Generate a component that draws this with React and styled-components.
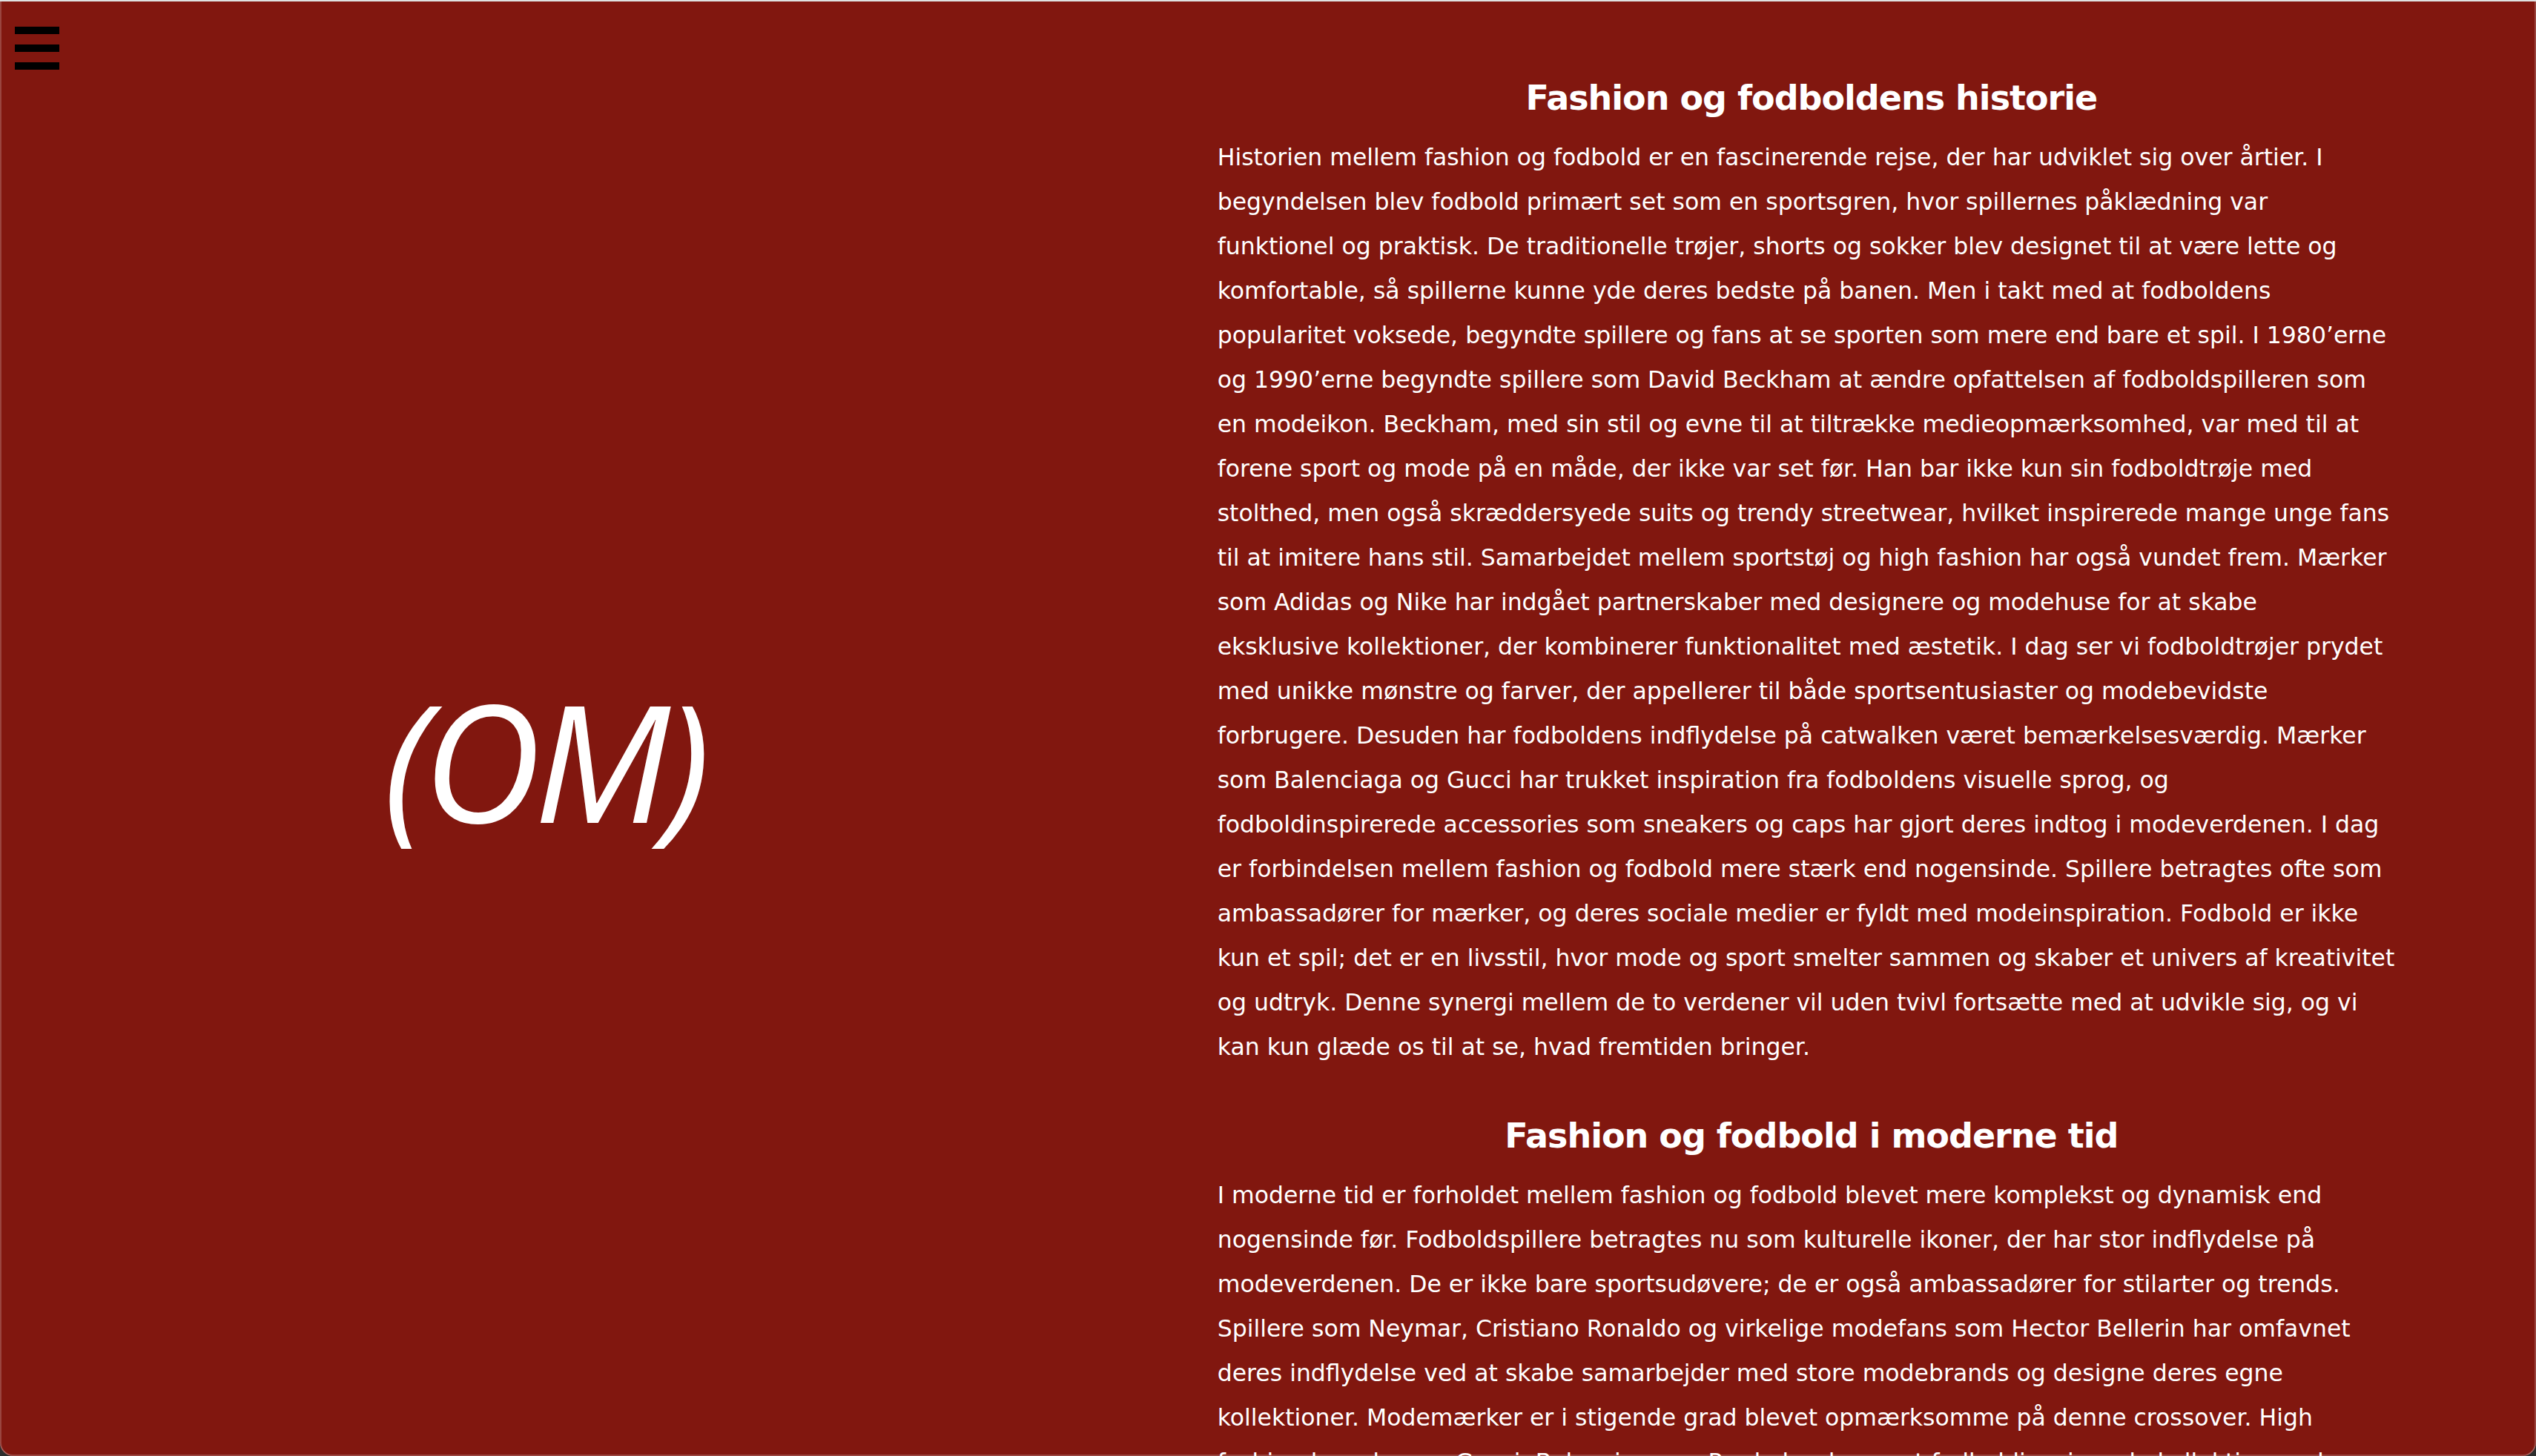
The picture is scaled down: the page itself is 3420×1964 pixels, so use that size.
import React from 'react';
import styled, { createGlobalStyle } from 'styled-components';

// lines kept as in the original layout, so the wrapping stays the same
const sections = [
  {
    title: 'Fashion og fodboldens historie',
    lines: [
      'Historien mellem fashion og fodbold er en fascinerende rejse, der har udviklet sig over årtier. I',
      'begyndelsen blev fodbold primært set som en sportsgren, hvor spillernes påklædning var',
      'funktionel og praktisk. De traditionelle trøjer, shorts og sokker blev designet til at være lette og',
      'komfortable, så spillerne kunne yde deres bedste på banen. Men i takt med at fodboldens',
      'popularitet voksede, begyndte spillere og fans at se sporten som mere end bare et spil. I 1980’erne',
      'og 1990’erne begyndte spillere som David Beckham at ændre opfattelsen af fodboldspilleren som',
      'en modeikon. Beckham, med sin stil og evne til at tiltrække medieopmærksomhed, var med til at',
      'forene sport og mode på en måde, der ikke var set før. Han bar ikke kun sin fodboldtrøje med',
      'stolthed, men også skræddersyede suits og trendy streetwear, hvilket inspirerede mange unge fans',
      'til at imitere hans stil. Samarbejdet mellem sportstøj og high fashion har også vundet frem. Mærker',
      'som Adidas og Nike har indgået partnerskaber med designere og modehuse for at skabe',
      'eksklusive kollektioner, der kombinerer funktionalitet med æstetik. I dag ser vi fodboldtrøjer prydet',
      'med unikke mønstre og farver, der appellerer til både sportsentusiaster og modebevidste',
      'forbrugere. Desuden har fodboldens indflydelse på catwalken været bemærkelsesværdig. Mærker',
      'som Balenciaga og Gucci har trukket inspiration fra fodboldens visuelle sprog, og',
      'fodboldinspirerede accessories som sneakers og caps har gjort deres indtog i modeverdenen. I dag',
      'er forbindelsen mellem fashion og fodbold mere stærk end nogensinde. Spillere betragtes ofte som',
      'ambassadører for mærker, og deres sociale medier er fyldt med modeinspiration. Fodbold er ikke',
      'kun et spil; det er en livsstil, hvor mode og sport smelter sammen og skaber et univers af kreativitet',
      'og udtryk. Denne synergi mellem de to verdener vil uden tvivl fortsætte med at udvikle sig, og vi',
      'kan kun glæde os til at se, hvad fremtiden bringer.',
    ],
  },
  {
    title: 'Fashion og fodbold i moderne tid',
    lines: [
      'I moderne tid er forholdet mellem fashion og fodbold blevet mere komplekst og dynamisk end',
      'nogensinde før. Fodboldspillere betragtes nu som kulturelle ikoner, der har stor indflydelse på',
      'modeverdenen. De er ikke bare sportsudøvere; de er også ambassadører for stilarter og trends.',
      'Spillere som Neymar, Cristiano Ronaldo og virkelige modefans som Hector Bellerin har omfavnet',
      'deres indflydelse ved at skabe samarbejder med store modebrands og designe deres egne',
      'kollektioner. Modemærker er i stigende grad blevet opmærksomme på denne crossover. High',
      'fashion-brands som Gucci, Balenciaga og Prada har lanceret fodboldinspirerede kollektioner, der',
    ],
  },
];

const App = () => {
  return (
    <>
      <GlobalStyle />
      <Window>
        <MenuButton aria-label="Menu">
          <Bar />
          <Bar />
          <Bar />
        </MenuButton>

        <Intro>
          <Title>(OM)</Title>
        </Intro>

        <Article>
          {sections.map((section) => (
            <Section key={section.title}>
              <Heading>{section.title}</Heading>
              <Text>
                {section.lines.map((line, i) => (
                  <Line key={i}>{line}</Line>
                ))}
              </Text>
            </Section>
          ))}
        </Article>
      </Window>
    </>
  );
};

export default App;

const GlobalStyle = createGlobalStyle`
  html, body {
    margin: 0;
    padding: 0;
    background: #2e2e2e;
  }

  body {
    font-family: "DejaVu Sans", "Noto Sans", sans-serif;
    color: #ffffff;
  }

  * {
    box-sizing: border-box;
  }
`;

const Window = styled.div`
  height: 100vh;
  overflow: hidden;
  display: grid;
  grid-template-columns: 3fr 4fr;
  align-items: start;
  background-color: #81170f;
  border-top: 2px solid #dfe2e2;
  border-radius: 0 0 18px 18px;
  box-shadow: inset 2px 0 0 rgba(255, 255, 255, 0.2),
    inset -2px 0 0 rgba(255, 255, 255, 0.2),
    inset 0 -2px 0 rgba(255, 255, 255, 0.2);
`;

const MenuButton = styled.button`
  position: fixed;
  top: 36px;
  left: 20px;
  display: flex;
  flex-direction: column;
  gap: 14px;
  padding: 0;
  border: none;
  background: none;
  cursor: pointer;
`;

const Bar = styled.span`
  display: block;
  width: 60px;
  height: 10px;
  background: #000000;
`;

const Intro = styled.div`
  height: calc(100vh - 2px);
  display: flex;
  align-items: center;
  justify-content: center;
  padding-top: 84px;
`;

const Title = styled.h1`
  margin: 0;
  font-family: "Open Sans", "Noto Sans", sans-serif;
  font-style: italic;
  font-weight: 400;
  font-size: 220px;
  letter-spacing: -9px;
  line-height: 1;
  color: #ffffff;
`;

const Article = styled.main`
  padding: 100px 176px 0;
`;

const Section = styled.section`
  margin-bottom: 60px;
`;

const Heading = styled.h2`
  margin: 0 0 20px;
  font-size: 46px;
  font-weight: 700;
  letter-spacing: -1px;
  line-height: 60px;
  text-align: center;
`;

const Text = styled.p`
  margin: 0;
  font-size: 31.5px;
  line-height: 60px;
`;

const Line = styled.span`
  display: block;
  white-space: nowrap;
`;
